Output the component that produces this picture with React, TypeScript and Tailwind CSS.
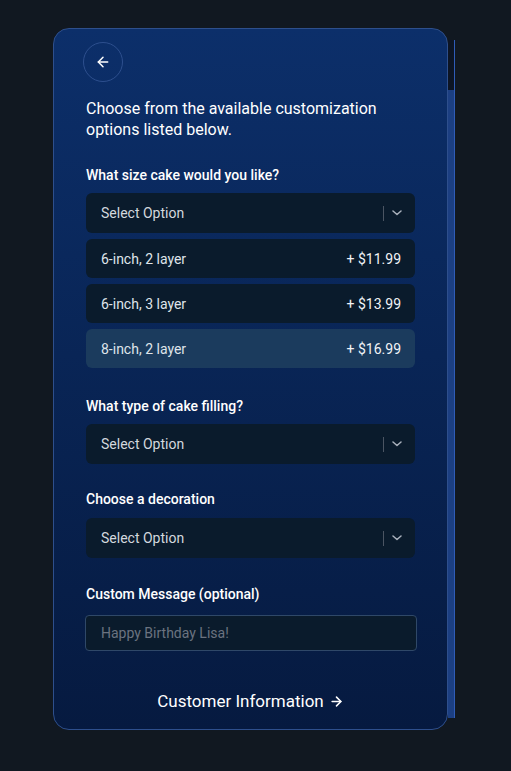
import { ArrowLeft, ArrowRight } from 'lucide-react';

const sizeOptions = [
  { label: '6-inch, 2 layer', price: '+ $11.99', active: false },
  { label: '6-inch, 3 layer', price: '+ $13.99', active: false },
  { label: '8-inch, 2 layer', price: '+ $16.99', active: true },
];

function SelectBox() {
  return (
    <div className="h-10 w-full shrink-0 rounded-md bg-[#0a1b2c] flex items-center pl-[15px] pr-[13px]">
      <span className="flex-1 text-sm text-[#d3d8de]">Select Option</span>
      <span className="w-px h-[15px] bg-[#4b5563] mr-2" />
      <svg width="10" height="6" viewBox="0 0 10 6" fill="none" className="text-[#aab2bd]">
        <path d="M1 1l4 3.5L9 1" stroke="currentColor" strokeWidth="1.5" strokeLinecap="round" strokeLinejoin="round" />
      </svg>
    </div>
  );
}

function Label({ children }: { children: React.ReactNode }) {
  return <p className="text-sm leading-5 text-white [font-weight:500]">{children}</p>;
}

export default function App() {
  return (
    <div
      className="min-h-screen bg-[#111821] flex justify-start pt-[28px] pl-[53px]"
      style={{ fontFamily: 'Roboto, "Liberation Sans", sans-serif' }}
    >
      <div className="w-[395px] h-[702px] shrink-0 rounded-2xl border border-[#2e4f8c] bg-gradient-to-b from-[#0c2f6a] to-[#061a40] px-8 pt-[13px] pb-[16px] flex flex-col">
        <button className="-ml-[3px] shrink-0 w-10 h-10 rounded-full border border-[#2d4f8e] flex items-center justify-center">
          <ArrowLeft className="w-4 h-4 text-white" strokeWidth={2.25} />
        </button>

        <h1 className="mt-4 text-base leading-[21px] text-white">
          Choose from the available customization options listed below.
        </h1>

        <div className="mt-[25px] flex flex-col gap-2">
          <Label>What size cake would you like?</Label>
          <div className="flex flex-col gap-[6px]">
            <SelectBox />
            {sizeOptions.map(o => (
              <div
                key={o.label}
                className={`h-[39px] shrink-0 rounded-md flex items-center justify-between pl-[15px] pr-[14px] text-sm text-[#dfe4ea] ${
                  o.active ? 'bg-[#1b3b5d]' : 'bg-[#0a1b2c]'
                }`}
              >
                <span>{o.label}</span>
                <span className="text-[#f1f3f6]">{o.price}</span>
              </div>
            ))}
          </div>
        </div>

        <div className="mt-[28px] flex flex-col gap-2">
          <Label>What type of cake filling?</Label>
          <SelectBox />
        </div>

        <div className="mt-[25px] flex flex-col gap-[9px]">
          <Label>Choose a decoration</Label>
          <SelectBox />
        </div>

        <div className="mt-[26px] flex flex-col gap-[11px]">
          <Label>Custom Message (optional)</Label>
          <input
            placeholder="Happy Birthday Lisa!"
            className="-ml-px w-[332px] h-9 rounded-[4px] border border-[#2f4868] bg-[#0a1b2c] px-[15px] text-sm text-white placeholder:text-[#6b7380] outline-none"
          />
        </div>

        <button className="mt-[38px] flex items-center justify-center gap-[5px] text-[17px] leading-6 text-white">
          Customer Information
          <ArrowRight className="w-[15px] h-[15px]" strokeWidth={2.5} />
        </button>
      </div>

      <div className="mt-3 h-[678px] w-[7px] flex flex-col border-r border-[#2f5cb8]">
        <div className="h-[50px] bg-[#0d1524]" />
        <div className="flex-1 bg-[#1c3f82]" />
      </div>
    </div>
  );
}
